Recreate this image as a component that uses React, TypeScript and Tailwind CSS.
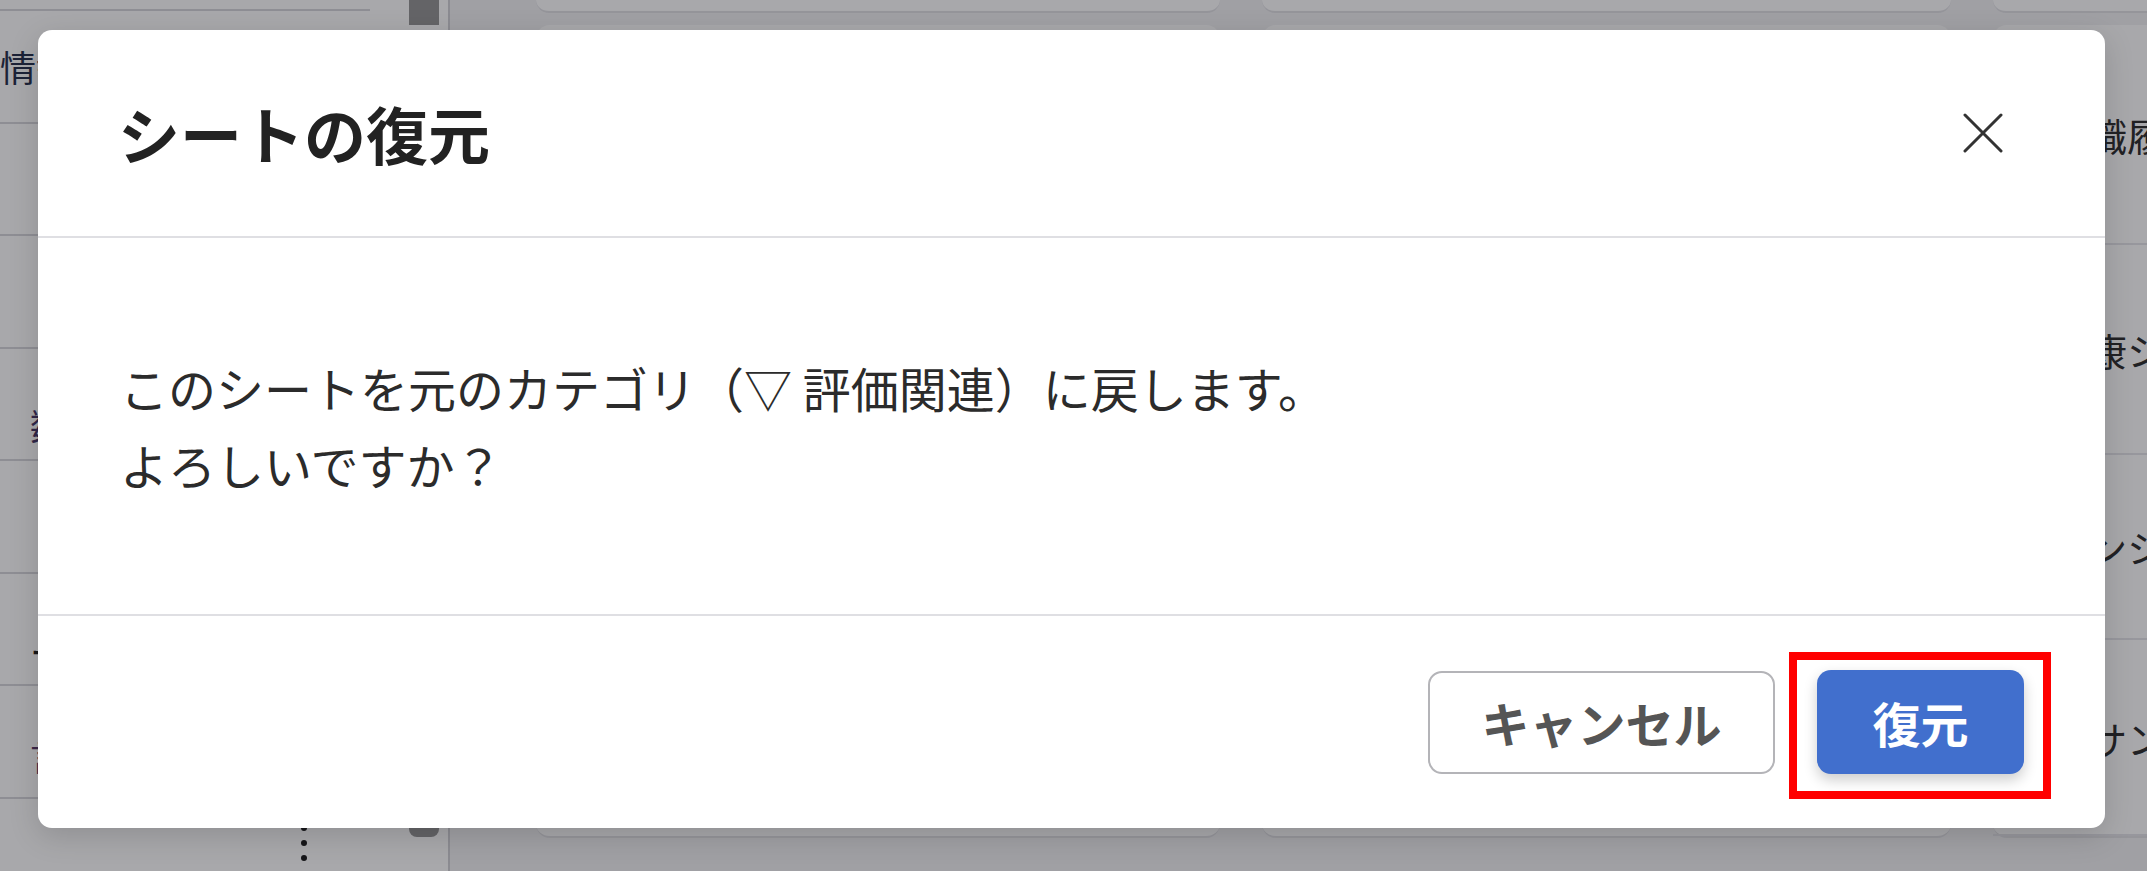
const jp = "font-['Noto_Sans_CJK_JP','Noto_Sans',sans-serif]";

const sideRows = [
  { text: "情報", pad: "pl-0", tone: "text-[#2b3550]" },
  { text: "", pad: "pl-[30px] pt-[40px]", tone: "text-[#333]" },
  { text: "", pad: "pl-[30px] pt-[40px]", tone: "text-[#333]" },
  { text: "数値評価", pad: "pl-[30px] pt-[40px]", tone: "text-[#4a3a6a]" },
  { text: "", pad: "pl-[30px] pt-[40px]", tone: "text-[#333]" },
  { text: "ー", pad: "pl-[30px] pt-[44px]", tone: "text-[#222]" },
  { text: "言語", pad: "pl-[30px] pt-[28px]", tone: "text-[#5a3a6a]" },
];

const rightRows = [
  { text: "前職履歴", h: "h-[220px]" },
  { text: "健康シート", h: "h-[210px]" },
  { text: "インシデント", h: "h-[185px]" },
  { text: "・サンクスカード", h: "flex-1" },
];

function Sidebar() {
  return (
    <div className="flex h-full w-[450px] shrink-0 border-r-2 border-[#d4d4d8] bg-white">
      <div className="flex w-[409px] flex-col">
        <div className="h-[11px] w-[370px] shrink-0 border-b-2 border-[#d8d8dc]" />
        {sideRows.map((row, i) => (
          <div
            key={i}
            className={`flex h-[112.5px] w-[370px] shrink-0 items-center border-b-2 border-[#d8d8dc] ${row.pad}`}
          >
            <span className={`text-[36px] ${row.tone}`}>{row.text}</span>
          </div>
        ))}
        <div className="flex flex-1 justify-end pr-[102px] pt-[26px]">
          <div className="flex flex-col gap-[9px]">
            <div className="h-[6px] w-[6px] rounded-full bg-[#222]" />
            <div className="h-[6px] w-[6px] rounded-full bg-[#222]" />
            <div className="h-[6px] w-[6px] rounded-full bg-[#222]" />
          </div>
        </div>
      </div>
      <div className="flex w-[30px] flex-col justify-between pb-[34px]">
        <div className="h-[25px] bg-[#989898]" />
        <div className="h-[12px] rounded-b-[8px] bg-[#989898]" />
      </div>
    </div>
  );
}

function Column({ children }: { children?: React.ReactNode }) {
  return (
    <div className="flex h-full flex-col gap-[12px]">
      <div className="h-[13px] rounded-b-[14px] border-b-2 border-[#e2e2e6] bg-white" />
      <div className="flex h-[813px] flex-col rounded-[14px] border-b-2 border-[#e2e2e6] bg-white">
        {children}
      </div>
    </div>
  );
}

function Background() {
  return (
    <div className="flex h-full">
      <Sidebar />
      <div className="flex-1 overflow-hidden bg-[#f3f3f5] pl-[86px]">
        <div className="grid h-full grid-cols-[684px_689px_689px] gap-x-[42px]">
          <Column />
          <Column />
          <Column>
            {rightRows.map((row, i) => (
              <div
                key={i}
                className={`flex items-center border-b-2 border-[#e6e6ea] pl-[58px] ${row.h}`}
              >
                <span className="text-[38px] text-[#333]">{row.text}</span>
              </div>
            ))}
          </Column>
        </div>
      </div>
    </div>
  );
}

function RestoreDialog() {
  return (
    <div className="flex h-[798px] w-[2067px] flex-col rounded-[14px] bg-white shadow-[0_8px_30px_rgba(0,0,0,0.15)]">
      <div className="flex h-[208px] shrink-0 items-center justify-between border-b-2 border-[#dfdfe3] pl-[80px] pr-[80px]">
        <h2 className="text-[62px] font-bold leading-none text-[#222]">シートの復元</h2>
        <button className="flex h-[84px] w-[84px] items-center justify-center">
          <svg width="40" height="40" viewBox="0 0 40 40" fill="none">
            <path d="M2 2L38 38M38 2L2 38" stroke="#333" strokeWidth="3" strokeLinecap="round" />
          </svg>
        </button>
      </div>
      <div className="flex flex-1 flex-col justify-center px-[82px] text-[48px] leading-[77px] text-[#2b2b2b]">
        <p>このシートを元のカテゴリ（▽ 評価関連）に戻します。</p>
        <p>よろしいですか？</p>
      </div>
      <div className="flex h-[214px] shrink-0 items-center justify-end gap-[42px] border-t-2 border-[#dfdfe3] pr-[81px]">
        <button className="flex h-[103px] w-[347px] items-center justify-center rounded-[14px] border-2 border-[#b4b4b8] bg-white text-[48px] font-bold text-[#555]">
          キャンセル
        </button>
        <div className="relative">
          <button className="flex h-[104px] w-[207px] items-center justify-center rounded-[14px] bg-[#416fcd] text-[48px] font-bold text-white shadow-[0_6px_14px_rgba(0,0,0,0.2)]">
            復元
          </button>
          <div className="pointer-events-none absolute -bottom-[25px] -left-[28px] -right-[27px] -top-[18px] border-[8px] border-[#ff0000]" />
        </div>
      </div>
    </div>
  );
}

export default function App() {
  return (
    <div className={`relative h-[871px] w-[2147px] overflow-hidden bg-white ${jp}`}>
      <Background />
      <div className="absolute inset-0 bg-[#00000a]/[0.34] pl-[38px] pt-[30px]">
        <RestoreDialog />
      </div>
    </div>
  );
}
